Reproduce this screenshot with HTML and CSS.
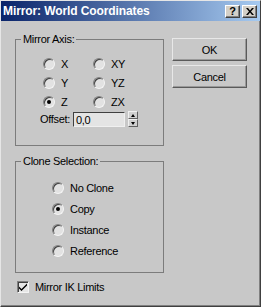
FILE: index.html
```html
<!DOCTYPE html>
<html lang="en">
<head>
    <meta charset="UTF-8">
    <title>Mirror: World Coordinates</title>
    <link rel="stylesheet" href="styles.css">
</head>
<body>
    <div class="window">
        <div class="titlebar">
            <span class="title">Mirror: World Coordinates</span>
            <span class="caption-btn">?</span>
            <span class="caption-btn close">
                <svg width="8" height="7" viewBox="0 0 8 7"><path d="M0 0h2l2 2.5 2-2.5h2l-3 3.5 3 3.5h-2l-2-2.5-2 2.5h-2l3-3.5z" fill="#000"/></svg>
            </span>
        </div>
        <div class="main">
            <div class="left">
                <!-- Mirror Axis -->
                <fieldset class="group axis">
                    <legend>Mirror Axis:</legend>
                    <div class="axis-grid">
                        <label class="option"><span class="radio"></span>X</label>
                        <label class="option"><span class="radio"></span>XY</label>
                        <label class="option"><span class="radio"></span>Y</label>
                        <label class="option"><span class="radio"></span>YZ</label>
                        <label class="option"><span class="radio checked"></span>Z</label>
                        <label class="option"><span class="radio"></span>ZX</label>
                    </div>
                    <div class="offset-row">
                        <span class="offset-label">Offset:</span>
                        <span class="field">0,0</span>
                        <span class="spinner">
                            <span class="spin up"></span>
                            <span class="spin down"></span>
                        </span>
                    </div>
                </fieldset>

                <!-- Clone Selection -->
                <fieldset class="group clone">
                    <legend>Clone Selection:</legend>
                    <div class="clone-list">
                        <label class="option"><span class="radio"></span>No Clone</label>
                        <label class="option"><span class="radio checked"></span>Copy</label>
                        <label class="option"><span class="radio"></span>Instance</label>
                        <label class="option"><span class="radio"></span>Reference</label>
                    </div>
                </fieldset>

                <label class="check-row">
                    <span class="checkbox">
                        <svg width="8" height="8" viewBox="0 0 8 8"><path d="M0 3.5l2.5 2.5 5.5-5.5v2l-5.5 5.5-2.5-2.5z" fill="#000"/></svg>
                    </span>
                    Mirror IK Limits
                </label>
            </div>
            <div class="right">
                <button class="btn">OK</button>
                <button class="btn">Cancel</button>
            </div>
        </div>
    </div>
</body>
</html>
```

FILE: styles.css
```css
body {
    margin: 0;
    font-family: "Liberation Sans", Arial, sans-serif;
    font-size: 11px;
    letter-spacing: -0.3px;
    color: #000;
}
.window {
    width: 261px;
    height: 307px;
    box-sizing: border-box;
    background-color: #c8c8c8;
    border: 1px solid;
    border-color: #e6e6e6 #404040 #404040 #e6e6e6;
    box-shadow: inset -1px -1px 0 #808080;
}
.titlebar {
    height: 20px;
    display: flex;
    align-items: center;
    padding: 0 3px 0 2px;
    background: linear-gradient(to right, #0a246a, #a6caf0);
}
.title {
    flex: 1;
    color: #fff;
    font-weight: bold;
    font-size: 12px;
    letter-spacing: -0.1px;
}
.caption-btn {
    width: 15px;
    height: 13px;
    box-sizing: border-box;
    margin-left: 2px;
    display: flex;
    align-items: center;
    justify-content: center;
    background-color: #d4d0c8;
    border: 1px solid;
    border-color: #fff #404040 #404040 #fff;
    box-shadow: inset -1px -1px 0 #808080;
    font-weight: bold;
    font-size: 11px;
    letter-spacing: 0;
    line-height: 1;
}
.main {
    display: flex;
    padding: 12px 0 0 14px;
}
.left {
    width: 149px;
}
.right {
    margin-left: 8px;
    padding-top: 5px;
    display: flex;
    flex-direction: column;
    gap: 4px;
}
.btn {
    width: 75px;
    height: 23px;
    padding: 0;
    font: inherit;
    letter-spacing: -0.3px;
    background-color: #c8c8c8;
    border: 1px solid;
    border-color: #e8e8e8 #5a5a5a #5a5a5a #e8e8e8;
    box-shadow: inset -1px -1px 0 #999;
    color: #000;
}
.group {
    margin: 0;
    padding: 0;
    border: 1px solid #7c7c7c;
    min-width: 0;
}
.group legend {
    padding: 0 2px;
    margin-left: 5px;
    line-height: 12px;
}
.option {
    display: flex;
    align-items: center;
    gap: 6px;
    height: 19px;
}
.radio {
    width: 12px;
    height: 12px;
    box-sizing: border-box;
    border-radius: 50%;
    border: 1px solid;
    border-color: #808080 #f4f4f4 #f4f4f4 #808080;
    box-shadow: inset 1px 1px 0 #404040;
    background-color: #e2e2e2;
    display: flex;
    align-items: center;
    justify-content: center;
}
.radio.checked::after {
    content: "";
    width: 4px;
    height: 4px;
    border-radius: 50%;
    background-color: #000;
}
.axis {
    padding: 9px 0 18px 0;
}
.axis-grid {
    display: grid;
    grid-template-columns: 50px 50px;
    margin-left: 27px;
}
.offset-row {
    display: flex;
    align-items: center;
    height: 16px;
    margin-left: 24px;
}
.offset-label {
    width: 33px;
}
.field {
    width: 52px;
    height: 15px;
    box-sizing: border-box;
    padding: 1px 0 0 2px;
    background-color: #e4e4e4;
    border: 1px solid;
    border-color: #404040 #f0f0f0 #f0f0f0 #404040;
    line-height: 12px;
}
.spinner {
    margin-left: 3px;
    width: 10px;
    height: 16px;
    display: flex;
    flex-direction: column;
}
.spin {
    flex: 1;
    display: flex;
    align-items: center;
    justify-content: center;
    background-color: #d0d0d0;
    border: 1px solid;
    border-color: #f0f0f0 #606060 #606060 #f0f0f0;
}
.spin.up::after {
    content: "";
    border: 2px solid transparent;
    border-top: 0;
    border-bottom: 3px solid #000;
}
.spin.down::after {
    content: "";
    border: 2px solid transparent;
    border-bottom: 0;
    border-top: 3px solid #000;
}
.clone {
    margin-top: 9px;
    padding: 10px 0 11px 0;
}
.clone-list {
    margin-left: 36px;
}
.clone .option {
    height: 21px;
}
.check-row {
    display: flex;
    align-items: center;
    gap: 6px;
    margin: 7px 0 0 2px;
    height: 13px;
}
.checkbox {
    width: 12px;
    height: 12px;
    box-sizing: border-box;
    border: 1px solid;
    border-color: #808080 #f4f4f4 #f4f4f4 #808080;
    box-shadow: inset 1px 1px 0 #404040;
    background-color: #e6e6e6;
    display: flex;
    align-items: center;
    justify-content: center;
}
```
